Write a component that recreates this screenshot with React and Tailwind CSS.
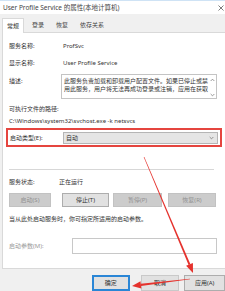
import React from 'react';

const font = "font-['Noto_Sans','Noto_Sans_CJK_SC',sans-serif]";

function Chevron({ up, className }) {
  return (
    <svg viewBox="0 0 6 4" className={className} fill="none" stroke="#666" strokeWidth="0.8">
      {up ? <path d="M0.8 3.2 L3 1 L5.2 3.2" /> : <path d="M0.8 0.8 L3 3 L5.2 0.8" />}
    </svg>
  );
}

function Btn({ children, disabled, className = '' }) {
  return (
    <div
      className={`flex items-center justify-center h-[14px] border ${
        disabled
          ? 'bg-[#cccccc] border-[#c2c2c2] text-[#929292]'
          : 'bg-[#e1e1e1] border-[#adadad] text-[#333]'
      } ${className}`}
    >
      {children}
    </div>
  );
}

function Arrows() {
  return (
    <svg className="absolute inset-0 pointer-events-none" width="225" height="291" viewBox="0 0 225 291">
      <g fill="#e5322d">
        {/* dropdown -> apply */}
        <polygon points="144.3,156.9 143.7,157.1 188.6,265.1 190.4,264.3" />
        <polygon points="193,273 192.9,262.9 186.1,265.8" />
        {/* apply -> ok */}
        <polygon points="190,279.3 190,278.7 140.8,283.8 141,286" />
        <polygon points="132,286 141.4,288.6 140.5,281.2" />
      </g>
    </svg>
  );
}

export default function App() {
  return (
    <div className={`relative w-[225px] h-[291px] overflow-hidden bg-[#f0f0f0] text-[6px] leading-[8px] text-[#333] ${font}`}>
      {/* Title bar */}
      <div className="h-[14px] bg-white border-t border-[#cfe3f5] flex items-center justify-between pl-[3px] pr-[1px]">
        <span className="text-[6.5px] text-[#444] whitespace-nowrap">User Profile Service 的属性(本地计算机)</span>
        <svg viewBox="0 0 6 6" className="w-[6px] h-[6px]" stroke="#444" strokeWidth="0.7">
          <path d="M0.5 0.5 L5.5 5.5 M5.5 0.5 L0.5 5.5" />
        </svg>
      </div>

      {/* Tabs */}
      <div className="h-[18px] flex items-end pl-[2px]">
        <div className="h-[15px] px-[4px] flex items-center bg-white border border-b-0 border-[#d9d9d9] relative top-px">常规</div>
        <div className="flex items-center h-[15px] gap-[12px] pl-[8px] text-[#444]">
          <span>登录</span>
          <span>恢复</span>
          <span>依存关系</span>
        </div>
      </div>

      {/* Panel */}
      <div className="ml-[2px] h-[237px] bg-white border-t border-l border-b border-[#d9d9d9] pl-[6px] flex flex-col">
        <div className="mt-[8px] flex h-[10px] items-center">
          <span className="w-[54px]">服务名称:</span>
          <span>ProfSvc</span>
        </div>
        <div className="mt-[7px] flex h-[10px] items-center">
          <span className="w-[54px]">显示名称:</span>
          <span>User Profile Service</span>
        </div>
        <div className="mt-[6px] flex">
          <span className="w-[52px] pt-[3px]">描述:</span>
          <div className="w-[156px] h-[25px] border border-[#c4c4c4] flex pl-[2px] pt-[2px]">
            <div className="flex-1 whitespace-nowrap">
              <div>此服务负责加载和卸载用户配置文件。如果已停止或禁</div>
              <div>用此服务，用户将无法再成功登录或注销，应用在获取</div>
            </div>
            <div className="w-[8px] flex flex-col justify-between items-center py-[1px]">
              <Chevron up className="w-[5px] h-[4px]" />
              <Chevron className="w-[5px] h-[4px]" />
            </div>
          </div>
        </div>
        <div className="mt-[6px]">可执行文件的路径:</div>
        <div className="mt-[4px]">C:\Windows\system32\svchost.exe -k netsvcs</div>

        <div className="mt-[3px] -ml-[3px] w-[216px] h-[19px] border-2 border-[#e5453f] flex items-center pl-[2px]">
          <span className="w-[53px] whitespace-nowrap">启动类型(E):</span>
          <div className="w-[155px] h-[12px] bg-[#e5e5e5] border border-[#b5b5b5] flex items-center justify-between pl-[2px] pr-[3px]">
            <span>自动</span>
            <Chevron className="w-[5px] h-[4px]" />
          </div>
        </div>

        <div className="mt-[22px] w-[205px] h-px bg-[#d7d7d7]" />

        <div className="mt-[8px] flex h-[8px] items-center">
          <span className="w-[50px]">服务状态:</span>
          <span>正在运行</span>
        </div>

        <div className="mt-[7px] flex">
          <Btn disabled className="w-[42px]">启动(S)</Btn>
          <Btn className="w-[47px] ml-[11px]">停止(T)</Btn>
          <Btn disabled className="w-[49px] ml-[4px]">暂停(P)</Btn>
          <Btn disabled className="w-[48px] ml-[6px]">恢复(R)</Btn>
        </div>

        <div className="mt-[8px] whitespace-nowrap">当从此处启动服务时，你可指定所适用的启动参数。</div>

        <div className="mt-[15px] flex items-center">
          <span className="w-[63px] text-[#9a9a9a] whitespace-nowrap">启动参数(M):</span>
          <div className="w-[145px] h-[16px] border border-[#c8c8c8] bg-white" />
        </div>
      </div>

      {/* Bottom buttons */}
      <div className="mt-[6px] flex">
        <div className="ml-[92px] w-[38px] h-[16px] flex items-center justify-center bg-[#e1e1e1] border-2 border-[#2a86d6]">确定</div>
        <div className="ml-[11px] w-[39px] h-[16px] flex items-center justify-center bg-[#e1e1e1] border border-[#c9c9c9]">取消</div>
        <div className="ml-[5px] w-[41px] h-[16px] flex items-center justify-center bg-[#e1e1e1] border border-[#adadad]">应用(A)</div>
      </div>

      <Arrows />
    </div>
  );
}
